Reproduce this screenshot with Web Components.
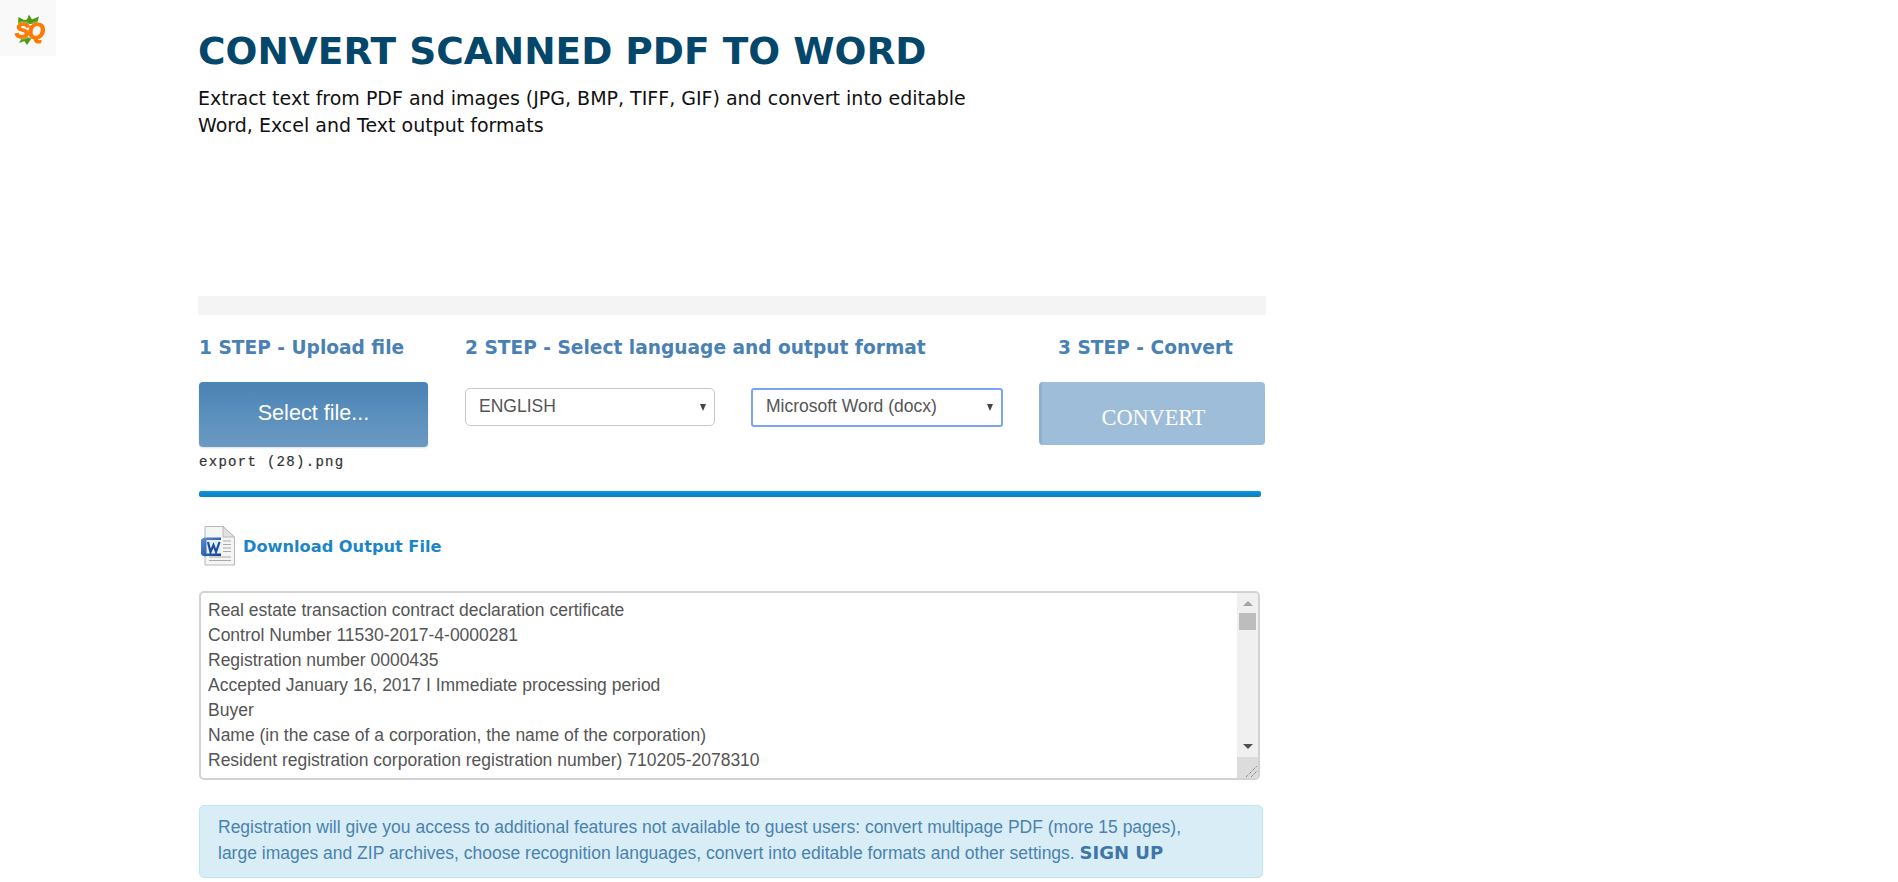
<!DOCTYPE html>
<html>
<head>
<meta charset="utf-8">
<title>Convert scanned PDF to Word</title>
<style>
  html, body { margin: 0; padding: 0; background: #fff; }
  body { font-family: "Liberation Sans", Arial, sans-serif; color: #555; }
</style>
</head>
<body>
<sq-page></sq-page>

<script>
const VERDANA = '"DejaVu Sans", Verdana, sans-serif';

class SqLogo extends HTMLElement {
  constructor() {
    super();
    this.attachShadow({ mode: 'open' }).innerHTML = `
      <style>
        :host { display: block; position: absolute; left: 0; top: 0; width: 56px; height: 56px; background: #f9f9f9; }
        svg { display: block; }
        text { font: italic 700 22px "Liberation Sans", sans-serif; fill: #ff7a00; stroke: #ff7a00; stroke-width: 1.100px; letter-spacing: -2px; filter: drop-shadow(0 0 1px #fff); }
      </style>
      <svg width="56" height="56" viewBox="0 0 56 56">
        <path d="M18 24 L18.500 17 L24 20 L27 19.500 L29 14.500 L32 19.500 L39 16.500 L37 24 Z" fill="#4c9a0e"/>
        <path d="M18 37 L23 38 L27 37 L32 38 L30 40.500 L27 45 L24.500 41 L19 43 L21 39.500 Z" fill="#4c9a0e"/>
        <text x="15" y="38">SQ</text>
      </svg>`;
  }
}

class SqHeader extends HTMLElement {
  constructor() {
    super();
    this.attachShadow({ mode: 'open' }).innerHTML = `
      <style>
        :host { display: block; height: 296px; box-sizing: border-box; padding-top: 25px; font-family: ${VERDANA}; }
        h1 { margin: 0; font-size: 37.500px; line-height: 52px; font-weight: 700; color: #04476b; }
        p { margin: 8px 0 0; font-size: 19px; line-height: 27px; color: #111; width: 800px; }
      </style>
      <h1><slot name="title"></slot></h1>
      <p><slot name="lead"></slot></p>`;
  }
}

class SqStep extends HTMLElement {
  constructor() {
    super();
    this.attachShadow({ mode: 'open' }).innerHTML = `
      <style>
        :host { display: block; font: 700 18.600px/24px ${VERDANA}; color: #4a81b5; white-space: nowrap; }
      </style>
      <slot></slot>`;
  }
}

class SqSelect extends HTMLElement {
  constructor() {
    super();
    this.attachShadow({ mode: 'open' }).innerHTML = `
      <style>
        :host { display: flex; align-items: center; justify-content: space-between; box-sizing: border-box; height: 38px; padding: 0 8px 2px 13px;
                border: 1px solid #c8c8c8; border-radius: 5px; background: #fff; font-size: 17.500px; color: #555; }
        :host([focused]) { border: 2px solid #7ba4f5; border-radius: 3px; padding-left: 13px; height: 39px; }
        .arrow { width: 0; height: 0; margin-top: 2px; border-left: 3.500px solid transparent; border-right: 3.500px solid transparent; border-top: 7px solid #444; }
      </style>
      <slot></slot><span class="arrow"></span>`;
  }
}

class SqScrollArea extends HTMLElement {
  constructor() {
    super();
    this.attachShadow({ mode: 'open' }).innerHTML = `
      <style>
        :host { display: flex; box-sizing: border-box; height: 189px; border: 2px solid #d2d2d2; border-radius: 5px; background: #fff; overflow: hidden; }
        .text { flex: 1; padding: 5px 7px; font-size: 17.500px; line-height: 25px; color: #555; overflow: hidden; white-space: pre-line; }
        .bar { width: 21px; display: flex; flex-direction: column; align-items: center; background: #f0f0f0; position: relative; }
        .up, .down { width: 0; height: 0; border-left: 5px solid transparent; border-right: 5px solid transparent; }
        .up { margin-top: 8px; border-bottom: 5px solid #a3a3a3; }
        .thumb { width: 17px; height: 17px; margin-top: 7px; background: #bdbdbd; }
        .down { margin-top: auto; margin-bottom: 29px; border-top: 5px solid #505050; }
        .grip { position: absolute; right: 0; bottom: 0; width: 21px; height: 21px; background: #dcdcdc; }
        svg { position: absolute; right: 0; bottom: 0; }
      </style>
      <div class="text"><slot></slot></div>
      <div class="bar">
        <div class="up"></div><div class="thumb"></div><div class="down"></div>
        <div class="grip"><svg width="14" height="14" viewBox="0 0 14 14"><path d="M2 13 L13 2 M7 13 L13 7" stroke="#666" stroke-width="1" stroke-dasharray="1 1" fill="none"/></svg></div>
      </div>`;
  }
}

class SqAlert extends HTMLElement {
  constructor() {
    super();
    this.attachShadow({ mode: 'open' }).innerHTML = `
      <style>
        :host { display: block; box-sizing: border-box; height: 73px; padding: 8px 18px; background: #d9edf7; border: 1px solid #bce8f1; border-radius: 5px;
                color: #4a82ad; font-size: 17.500px; line-height: 26px; }
        ::slotted(b) { font: 700 18px ${VERDANA}; color: #3f76aa; }
      </style>
      <slot></slot>`;
  }
}

class SqWordIcon extends HTMLElement {
  constructor() {
    super();
    this.attachShadow({ mode: 'open' }).innerHTML = `
      <style>:host { display: block; width: 36px; height: 40px; } svg { display: block; }</style>
      <svg width="36" height="40" viewBox="0 0 36 40">
        <defs>
          <linearGradient id="blue" x1="0" x2="1" y1="0" y2="1"><stop offset="0" stop-color="#5c8fd6"/><stop offset="1" stop-color="#123f8c"/></linearGradient>
        </defs>
        <path d="M5 .5 H23 L34.500 11 V39 H5 Z" fill="#f5f5f5" stroke="#b8b8b8"/>
        <path d="M23 .5 V11 H34.500 Z" fill="#e2e2e2" stroke="#b8b8b8"/>
        <path d="M23 15 H31 M23 18.500 H31 M23 22 H31 M23 25.500 H31 M9 31 H31 M9 34.500 H31" stroke="#a9a9a9" stroke-width="1.200"/>
        <path d="M1 14 Q2 11 8 11.500 H21 V30 H7 Q2 31 1 28 Z" fill="url(#blue)"/>
        <path d="M6.500 14 H21 V27.500 H6.500 Z" fill="#e6effb"/>
        <path d="M8 16 L10.500 26 L13.500 19 L16 26 L19.500 16" fill="none" stroke="#1a4f9c" stroke-width="2.200"/>
      </svg>`;
  }
}

class SqPage extends HTMLElement {
  constructor() {
    super();
    this.attachShadow({ mode: 'open' }).innerHTML = `
      <style>
        :host { display: block; width: 1068px; margin-left: 198px; }
        .greybar { height: 19px; background: #f4f4f4; }
        .steps { display: grid; grid-template-columns: 266px 574px 226px; height: 67px; box-sizing: border-box; padding: 0 0 1px 1px; align-items: center; }
        .steps sq-step:last-child { text-align: center; padding-right: 13px; }
        .row { display: grid; grid-template-columns: 230px 250px 252px 226px; column-gap: 36px; padding-left: 1px; align-items: start; height: 65px; }
        .file { box-sizing: border-box; width: 229px; height: 65px; display: flex; align-items: center; justify-content: center; border-radius: 4px; padding-bottom: 3px;
                background: linear-gradient(#4a83b5, #6b9ac3); box-shadow: 0 1px 2px #0002; color: #fff; font-size: 21.600px; }
        .row sq-select { margin-top: 6px; }
        .convert { box-sizing: border-box; height: 63px; display: flex; align-items: center; justify-content: center; padding-top: 9px; border-radius: 4px;
                   border-left: 3px solid #8eb0cd; background: #9dbdd8; color: #fff; font: 22.300px "Liberation Serif", serif; }
        .name { height: 44px; padding: 7px 0 0 1px; box-sizing: border-box; font: 14px/16px "Liberation Mono", monospace; color: #333; letter-spacing: 1.300px; -webkit-text-stroke: .2px #333; }
        .progress { height: 6px; width: 1062px; margin-left: 1px; border-radius: 2px; background: linear-gradient(#0f94dc, #0980c0); }
        .download { display: flex; align-items: center; gap: 7px; height: 72px; margin-top: 13px; padding: 0 0 0 2px; margin-bottom: 9px; box-sizing: border-box;
                    font: 700 16.200px ${VERDANA}; color: #1c85c8; }
        sq-scroll-area { width: 1061px; margin-left: 1px; }
        sq-alert { width: 1064px; margin: 25px 0 0 1px; }
      </style>
      <sq-logo></sq-logo>
      <sq-header>
        <span slot="title">CONVERT SCANNED PDF TO WORD</span>
        <span slot="lead">Extract text from PDF and images (JPG, BMP, TIFF, GIF) and convert into editable<br>Word, Excel and Text output formats</span>
      </sq-header>
      <div class="greybar"></div>
      <div class="steps">
        <sq-step>1 STEP - Upload file</sq-step>
        <sq-step>2 STEP - Select language and output format</sq-step>
        <sq-step>3 STEP - Convert</sq-step>
      </div>
      <div class="row">
        <div class="file">Select file...</div>
        <sq-select>ENGLISH</sq-select>
        <sq-select focused>Microsoft Word (docx)</sq-select>
        <div class="convert">CONVERT</div>
      </div>
      <div class="name">export (28).png</div>
      <div class="progress"></div>
      <div class="download"><sq-word-icon></sq-word-icon><span>Download Output File</span></div>
      <sq-scroll-area>Real estate transaction contract declaration certificate
Control Number 11530-2017-4-0000281
Registration number 0000435
Accepted January 16, 2017 I Immediate processing period
Buyer
Name (in the case of a corporation, the name of the corporation)
Resident registration corporation registration number) 710205-2078310</sq-scroll-area>
      <sq-alert>Registration will give you access to additional features not available to guest users: convert multipage PDF (more 15 pages),<br>large images and ZIP archives, choose recognition languages, convert into editable formats and other settings. <b>SIGN UP</b></sq-alert>`;
  }
}

customElements.define('sq-logo', SqLogo);
customElements.define('sq-header', SqHeader);
customElements.define('sq-step', SqStep);
customElements.define('sq-select', SqSelect);
customElements.define('sq-scroll-area', SqScrollArea);
customElements.define('sq-alert', SqAlert);
customElements.define('sq-word-icon', SqWordIcon);
customElements.define('sq-page', SqPage);
</script>
</body>
</html>
